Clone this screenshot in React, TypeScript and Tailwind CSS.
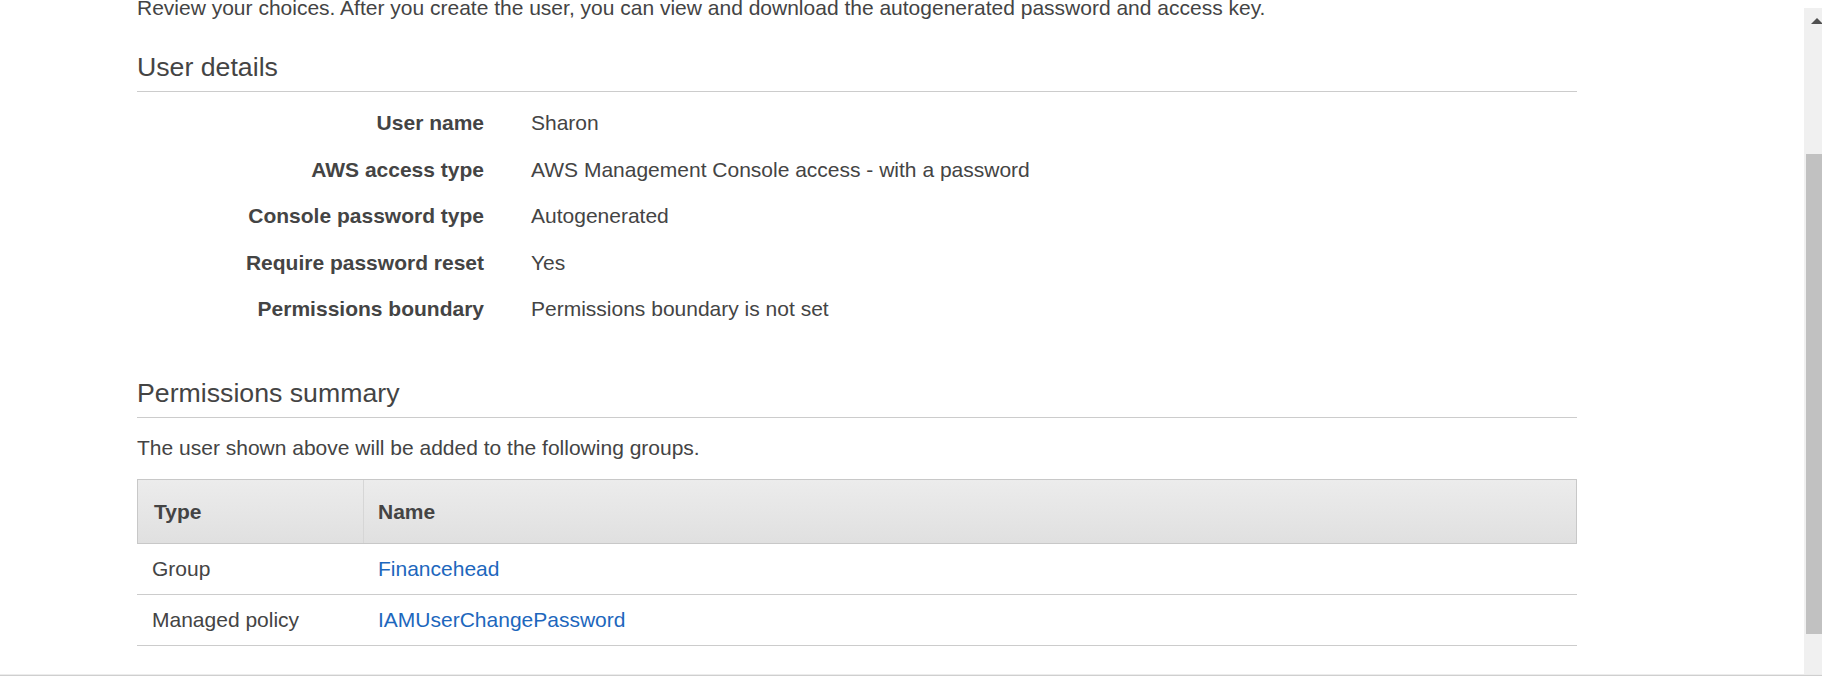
const details = [
  { label: 'User name', value: 'Sharon' },
  { label: 'AWS access type', value: 'AWS Management Console access - with a password' },
  { label: 'Console password type', value: 'Autogenerated' },
  { label: 'Require password reset', value: 'Yes' },
  { label: 'Permissions boundary', value: 'Permissions boundary is not set' },
]

const permissions = [
  { type: 'Group', name: 'Financehead' },
  { type: 'Managed policy', name: 'IAMUserChangePassword' },
]

function Scrollbar() {
  return (
    <div className="flex w-[18px] flex-col overflow-hidden pt-[8px]">
      <div className="flex flex-1 flex-col bg-[#f0f0f0]">
        <svg className="ml-[7px] mt-[10px] shrink-0" width="12" height="6" viewBox="0 0 12 6">
          <path d="M0 6 L6 0 L12 6 Z" fill="#505050" />
        </svg>
        <div className="ml-[2px] mt-[130px] h-[480px] bg-[#c1c1c1]" />
      </div>
    </div>
  )
}

export default function App() {
  return (
    <div className="flex h-[685px] w-[1822px] flex-col overflow-hidden bg-white font-['Liberation_Sans',Arial,sans-serif] text-[21px] text-[#444]">
      <div className="flex h-[674px] shrink-0">
        <main className="flex-1 overflow-hidden pl-[137px]">
          <div className="w-[1440px]">
            <p className="-mt-[6px] leading-[28px]">
              Review your choices. After you create the user, you can view and download the autogenerated password and access key.
            </p>

            <h2 className="mt-[30px] border-b border-[#cccccc] pb-[9px] text-[26.7px] leading-[30px] font-normal">
              User details
            </h2>
            <div className="pt-[8px]">
              {details.map((d) => (
                <div key={d.label} className="grid h-[46.6px] grid-cols-[347px_1fr] items-center gap-[47px] leading-[46.6px]">
                  <div className="text-right font-bold">{d.label}</div>
                  <div>{d.value}</div>
                </div>
              ))}
            </div>

            <h2 className="mt-[45px] border-b border-[#cccccc] pb-[9px] text-[26.7px] leading-[30px] font-normal">
              Permissions summary
            </h2>
            <p className="mt-[16px] leading-[28px]">The user shown above will be added to the following groups.</p>

            <div className="mt-[17px]">
              <div className="grid h-[65px] grid-cols-[225px_1fr] border border-[#c8c8c8] bg-linear-to-b from-[#ececec] to-[#e0e0e0] font-bold">
                <div className="flex items-center pl-[16px]">Type</div>
                <div className="flex items-center border-l border-[#d6d6d6] pl-[14px]">Name</div>
              </div>
              {permissions.map((p) => (
                <div key={p.name} className="grid h-[51px] grid-cols-[226px_1fr] items-center border-b border-[#cccccc]">
                  <div className="pl-[15px]">{p.type}</div>
                  <a href="#" className="pl-[15px] text-[#1d67bd]">
                    {p.name}
                  </a>
                </div>
              ))}
            </div>
          </div>
        </main>
        <Scrollbar />
      </div>
      <div className="h-[2px] shrink-0 border-t border-[#ececec] bg-[#cfcfcf]" />
    </div>
  )
}
